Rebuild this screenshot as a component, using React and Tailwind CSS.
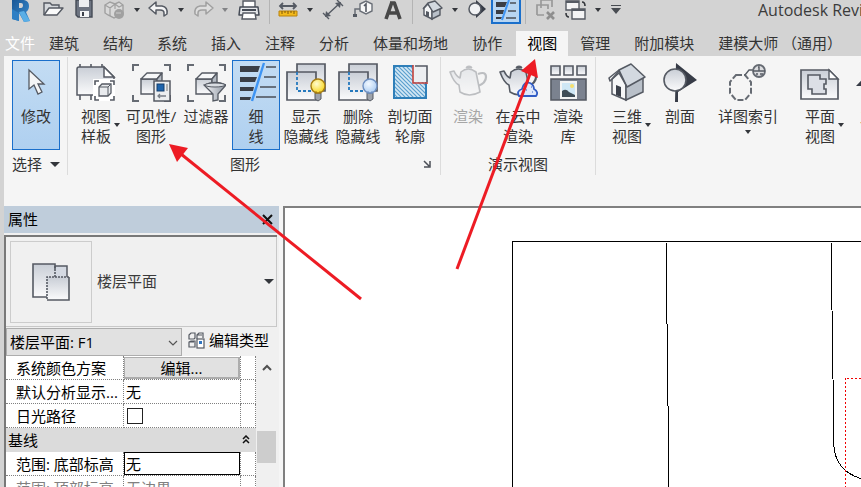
import { useState } from 'react';
import clsx from 'clsx';

const INK = '#555a63';

const Svg = ({ size = 40, children }) => (
  <svg width={size} height={size} viewBox={`0 0 ${size} ${size}`} fill="none" className="shrink-0" aria-hidden="true">
    {children}
  </svg>
);

// Gradients shared by all icons
const Gradients = () => (
  <svg width="0" height="0" className="absolute" aria-hidden="true">
    <defs>
      <linearGradient id="metal" x1="0" y1="0" x2="0" y2="1">
        <stop offset="0" stopColor="#c9ced6" />
        <stop offset="1" stopColor="#fbfbfc" />
      </linearGradient>
      <linearGradient id="steel" x1="0" y1="0" x2="1" y2="0">
        <stop offset="0" stopColor="#f4f5f7" />
        <stop offset="1" stopColor="#8f97a3" />
      </linearGradient>
      <linearGradient id="logo" x1="0" y1="0" x2="1" y2="1">
        <stop offset="0" stopColor="#1a5796" />
        <stop offset="1" stopColor="#3b8fd2" />
      </linearGradient>
      <radialGradient id="bulbOn" cx="0.4" cy="0.35" r="0.7">
        <stop offset="0" stopColor="#fffbd0" />
        <stop offset="1" stopColor="#f8d413" />
      </radialGradient>
      <radialGradient id="bulbOff" cx="0.4" cy="0.35" r="0.7">
        <stop offset="0" stopColor="#f2f8ff" />
        <stop offset="1" stopColor="#a9cbf2" />
      </radialGradient>
      <pattern id="hatch" width="4" height="4" patternUnits="userSpaceOnUse">
        <rect width="4" height="4" fill="#d4e8f5" />
        <path d="M-1 -1 5 5M-1 3 1 5M3 -1 5 1" stroke="#5a9fce" strokeWidth="1.2" />
      </pattern>
    </defs>
  </svg>
);

/* ---------- ribbon icons ---------- */

const CursorIcon = () => (
  <Svg>
    <path d="M13 8v19l5-4 4 9 4-2-4-8h6z" fill="#f4f5f6" stroke={INK} strokeWidth="1.3" />
  </Svg>
);

const Brackets = () => (
  <path d="M2 9V3h6M33 3h6v6M39 33v6h-6M8 39H2v-6" stroke="#666b73" strokeWidth="2" />
);

const Cube = () => (
  <>
    <path d="M10 17h16v15H10z" fill="url(#metal)" stroke={INK} strokeWidth="1.4" />
    <path d="M10 17l6-6h15l-5 6z" fill="#f7f8f9" stroke={INK} strokeWidth="1.4" strokeLinejoin="round" />
    <path d="M26 17l5-6v14l-5 7z" fill="#b4bac3" stroke={INK} strokeWidth="1.4" strokeLinejoin="round" />
  </>
);

const TemplateIcon = () => (
  <Svg>
    <path d="M4 2v36M15 2v4M26 2v4M15 33v5" stroke={INK} strokeWidth="1.6" />
    <path d="M1 7q0-2 2-2h25l10 10v18H1z" fill="url(#metal)" stroke={INK} strokeWidth="1.5" />
    <path d="M28 5v10h10z" fill="#fff" stroke={INK} strokeWidth="1.5" />
    <path d="M17 17h22v22H17z" fill="#fff" />
    <path d="M19 23v-4h4M34 19h4v4M38 34v4h-4M23 38h-4v-4" stroke={INK} strokeWidth="1.6" />
    <path d="M23 25l3-3h9v9l-3 3h-9z" fill="#e9ebee" stroke={INK} strokeWidth="1.3" />
    <path d="M23 25h9v9M32 25l3-3" stroke={INK} />
  </Svg>
);

const VisibilityIcon = () => (
  <Svg>
    <Brackets />
    <Cube />
    <rect x="23" y="19" width="16" height="20" fill="#eceef0" stroke={INK} strokeWidth="1.5" />
    <rect x="26" y="22" width="7" height="7" fill="#1f65ad" stroke="#153e6d" />
    <path d="M36 22v7" stroke="#777" />
    <path d="M35 34h-8M29 32l-2 2 2 2" stroke="#777d86" strokeWidth="1.3" />
  </Svg>
);

const FilterIcon = () => (
  <Svg>
    <Brackets />
    <Cube />
    <path d="M18 23q11-5 22 0l-8 9v6l-5 1v-7z" fill="url(#steel)" stroke={INK} strokeWidth="1.3" />
    <ellipse cx="29" cy="23" rx="10" ry="2" fill="#d9dde2" stroke={INK} />
  </Svg>
);

const ThinLinesIcon = () => (
  <Svg>
    <path d="M4 4h20l-2 6H4zM4 15h17l-2 5H4zM4 25h14l-1 4H4zM4 35h11l-1 3H4z" fill="#3a3e46" />
    <path d="M30 5h10M28 15h12M24 25h16M20 35h20" stroke="#4b4f57" strokeWidth="1.6" />
    <path d="M28 1 16 39" stroke="#3d94f3" strokeWidth="2.4" />
  </Svg>
);

const HiddenLinesIcon = ({ bulb, stroke }) => (
  <Svg>
    <path d="M11 2h28v27H11z" fill="url(#metal)" stroke={INK} strokeWidth="1.7" />
    <path d="M1 10h29v28H1z" fill="url(#metal)" stroke={INK} strokeWidth="1.7" />
    <path d="M11 10v19h17" stroke="#2679bd" strokeWidth="1.8" strokeDasharray="3 2" />
    <path d="M29 31h6v6l-3 2-3-2z" fill="#9da2aa" stroke={INK} />
    <circle cx="32" cy="24" r="7" fill={bulb} stroke={stroke} strokeWidth="1.4" />
    <path d="M30 29v3M34 29v3" stroke={stroke} />
  </Svg>
);

const CutProfileIcon = () => (
  <Svg>
    <path d="M4 4h32v32H4z" fill="url(#hatch)" stroke="#2f7fb9" strokeWidth="2" />
    <path d="M23 3h14v17H23z" fill="#eceef1" />
    <path d="M25 4h12v16" stroke={INK} strokeWidth="1.6" />
    <path d="M23 3v18h15" stroke="#c4423c" strokeWidth="1.6" />
  </Svg>
);

const Teapot = () => (
  <>
    <path d="M30 12q8-3 8 3 0 6-8 9" stroke={INK} strokeWidth="2.2" />
    <path d="M13 10q7-6 15 0l4 20q-11 6-20 0l-1-7q-5-2-9-13l4-1q2 5 6 7z" fill="url(#metal)" stroke={INK} strokeWidth="1.6" strokeLinejoin="round" />
    <path d="M18 6q0-2 3-2t3 2z" fill={INK} stroke={INK} />
  </>
);

const RenderIcon = () => (
  <Svg>
    <g opacity="0.35">
      <Teapot />
    </g>
  </Svg>
);

const CloudRenderIcon = () => (
  <Svg>
    <Teapot />
    <path d="M21 34q-3-5 3-7 2-8 8-6 4 2 4 6 5 3 2 7z" fill="#dfe8fa" stroke="#315cc4" strokeWidth="1.8" />
    <path d="M28 28h1M33 25h1M34 30h1" stroke="#315cc4" strokeWidth="1.2" />
  </Svg>
);

const GalleryIcon = () => (
  <Svg>
    <path d="M3 4h9v9H3zM16 4h9v9h-9zM29 4h9v9h-9z" fill="url(#metal)" stroke={INK} strokeWidth="1.6" />
    <path d="M3 17h35v21H3z" fill="#7b828f" stroke={INK} strokeWidth="1.6" />
    <path d="M13 20h15v16H13z" fill="#cfe7f5" stroke="#f3f4f4" strokeWidth="2" />
    <path d="M14 29q4-3 7 1l6 3v2H14z" fill="#3f4d57" />
    <circle cx="24" cy="24" r="2" fill="#f6df6d" />
  </Svg>
);

const HouseIcon = () => (
  <Svg>
    <path d="M5 17v15l14 6V22L12 9z" fill="#f5f6f7" stroke={INK} strokeWidth="1.5" />
    <path d="M19 24l17-9v15l-17 8z" fill="#b9c0c9" stroke={INK} strokeWidth="1.5" />
    <path d="M9 23l5 2v10l-5-2z" fill="#3b404a" />
    <path d="M12 8 24 2l14 13-18 10z" fill="#d3d9e0" stroke={INK} strokeWidth="1.5" strokeLinejoin="round" />
    <path d="M12 8 2 16l1 3 9-8 8 14" stroke={INK} strokeWidth="1.5" strokeLinejoin="round" />
  </Svg>
);

const SectionIcon = () => (
  <Svg>
    <path d="M16 1l21 17-19 12v10h-3z" fill="#373c47" />
    <circle cx="15" cy="18" r="11" fill="url(#metal)" stroke={INK} strokeWidth="1.6" />
  </Svg>
);

const CalloutIcon = () => (
  <Svg>
    <path d="M8 13h9l6 7v11l-6 7H8l-6-7V20z" stroke="#666b73" strokeWidth="2" strokeDasharray="6 2" />
    <path d="M17 13l4-5h6" stroke="#565b63" strokeWidth="1.3" />
    <circle cx="31" cy="9" r="6" fill="#dcdde0" stroke="#666b73" strokeWidth="1.8" />
    <path d="M25 9h12M30 5h1v4M28 12h2M32 12h3" stroke="#565b63" strokeWidth="1.4" />
  </Svg>
);

const PlanIcon = () => (
  <Svg>
    <path d="M1 8h28l9 9v20H1z" fill="url(#metal)" stroke={INK} strokeWidth="1.7" />
    <path d="M29 8v9h9z" fill="#fff" stroke={INK} strokeWidth="1.4" />
    <path d="M8 13h12v4h6v5h-2v5h2v5H12v-5H8z" fill="#dcdfe6" stroke={INK} strokeWidth="1.6" />
  </Svg>
);

const ElevationIcon = () => (
  <Svg>
    <path d="M1 24 20 4l19 20z" fill="#373c47" />
    <circle cx="20" cy="22" r="10" fill="url(#metal)" stroke={INK} strokeWidth="1.8" />
  </Svg>
);

/* ---------- small parts ---------- */

const Caret = ({ wide, faded }) => (
  <svg
    width={wide ? 10 : 6}
    height={wide ? 5 : 4}
    viewBox="0 0 10 6"
    preserveAspectRatio="none"
    className={clsx('shrink-0', faded && 'opacity-50')}
    aria-hidden="true"
  >
    <path d="M0 0h10L5 6z" fill="#33363b" />
  </svg>
);

const QuickButton = ({ label, className, children }) => (
  <button type="button" aria-label={label} className={clsx('flex h-6 shrink-0 justify-center', className)}>
    {children}
  </button>
);

const QuickCaret = ({ label, faded }) => (
  <button type="button" aria-label={label} className="flex h-5 w-4 shrink-0 items-center justify-center">
    <Caret faded={faded} />
  </button>
);

const Separator = () => <div className="mx-1 h-6 w-px shrink-0 bg-[#b4b4b4]" />;

const QuickAccess = () => (
  <header className="flex h-[31px] items-start overflow-hidden whitespace-nowrap pl-[5px]">
    <QuickButton label="Revit" className="mr-1 w-[30px]">
      <Svg size={24}>
        <path fillRule="evenodd" d="M4 0h12q5 1 5 6 0 4-3 6l4 9-6 1-5-9v8l-7-2zM11 3v5h2q2 0 2-3 0-2-2-2z" fill="url(#logo)" />
        <path d="M11 12l5-1 6 10-6 1z" fill="#5aaee6" />
        <path d="M4 9l7 4v8l-7-2z" fill="#2f7fc4" />
      </Svg>
    </QuickButton>
    <QuickButton label="打开" className="w-[30px]">
      <Svg size={24}>
        <path d="M2 15V3h6l2 2h7v4" fill="#d5d8dc" stroke={INK} strokeWidth="1.4" />
        <path d="M2 15 7 8h14l-6 7z" fill="#fafafa" stroke={INK} strokeWidth="1.4" strokeLinejoin="round" />
      </Svg>
    </QuickButton>
    <QuickButton label="保存" className="w-[30px]">
      <Svg size={24}>
        <path d="M4 0h16v17H6l-2-2z" fill="#6d7481" stroke="#454b56" strokeWidth="1.4" />
        <path d="M7 0h10v7H7z" fill="#eceef1" />
        <path d="M8 11h9v6H8z" fill="#f3f4f5" />
        <path d="M10 12h2v4h-2z" fill="#3c414a" />
      </Svg>
    </QuickButton>
    <QuickButton label="同步" className="w-[30px]">
      <Svg size={24}>
        <path d="M3 5l5-3 5 2 4-2 4 3v8l-9 5-6-3-3-2z" fill="#d9d9d9" stroke="#a0a0a0" strokeWidth="1.4" />
        <path d="M3 5l5 3 5-4 4 3 4-2M8 8v8M13 4v5" stroke="#a0a0a0" strokeWidth="1.2" />
        <circle cx="17" cy="14" r="5" fill="#a0a0a0" />
        <path d="M14 13h5" stroke="#ccc" />
      </Svg>
    </QuickButton>
    <QuickCaret label="同步选项" />
    <QuickButton label="放弃" className="w-7">
      <Svg size={24}>
        <path d="M2 8 9 2v4h6q6 1 5 8l-3 2v-3q0-3-4-3H9v4z" fill="#f4f4f5" stroke={INK} strokeWidth="1.5" strokeLinejoin="round" />
      </Svg>
    </QuickButton>
    <QuickCaret label="放弃列表" />
    <QuickButton label="重做" className="w-7">
      <Svg size={24}>
        <path d="M22 8 15 2v4H9Q3 7 4 14l3 2v-3q0-3 4-3h4v4z" fill="#dedede" stroke="#a0a0a0" strokeWidth="1.5" strokeLinejoin="round" />
      </Svg>
    </QuickButton>
    <QuickCaret label="重做列表" faded />
    <QuickButton label="打印" className="w-8">
      <Svg size={24}>
        <path d="M6 1h12v7H6z" fill="#fff" stroke={INK} strokeWidth="1.4" />
        <path d="M3 7h18l1 8H2z" fill="#e5e7ea" stroke="#454b56" strokeWidth="1.5" strokeLinejoin="round" />
        <path d="M5 10h14" stroke="#454b56" strokeWidth="2" />
        <path d="M6 13h12l1 6H5z" fill="#fff" stroke={INK} strokeWidth="1.4" />
      </Svg>
    </QuickButton>
    <Separator />
    <QuickButton label="测量" className="w-7">
      <Svg size={24}>
        <path d="M4 6h16M7 3 4 6l3 3M17 3l3 3-3 3" stroke={INK} strokeWidth="1.8" />
        <path d="M3 11h18v5H3z" fill="#f2b91c" stroke="#b9820d" />
        <path d="M6 11v3M9 11v2M12 11v3M15 11v2M18 11v3" stroke="#7d560a" />
      </Svg>
    </QuickButton>
    <QuickCaret label="测量选项" />
    <QuickButton label="对齐尺寸标注" className="w-[30px]">
      <Svg size={24}>
        <path d="M5 16 19 3M2 13l6 6M16 0l6 6" stroke={INK} strokeWidth="1.4" />
        <path d="M4 17l1-6 5 5zM20 2l-1 6-5-5z" fill={INK} />
      </Svg>
    </QuickButton>
    <QuickButton label="按类别标记" className="w-[30px]">
      <Svg size={24}>
        <path d="M9 4l6-3 6 3v7l-6 3-6-3z" fill="#f7f7f7" stroke="#6a6f77" strokeWidth="1.4" />
        <path d="M9 9H4v6" stroke="#6a6f77" strokeWidth="1.5" />
        <path d="M2 14h4v3H2z" fill={INK} />
        <path d="M13 6l2-2v8" stroke={INK} strokeWidth="1.6" />
      </Svg>
    </QuickButton>
    <QuickButton label="文字" className="w-[30px]">
      <Svg size={24}>
        <path d="M9 3h5M11 2 5 19M13 2l6 17M8 13h8" stroke="#484848" strokeWidth="3.6" />
      </Svg>
    </QuickButton>
    <Separator />
    <QuickButton label="默认三维视图" className="w-[30px]">
      <Svg size={24}>
        <path d="M4 8v7l8 4V10L8 4z" fill="#f5f6f7" stroke={INK} strokeWidth="1.4" />
        <path d="M12 11l8-3v7l-8 4z" fill="#b9c0c9" stroke={INK} strokeWidth="1.4" />
        <path d="M3 9 8 3l7-2 7 7-9 4-5-8" fill="#d3d9e0" stroke={INK} strokeWidth="1.4" strokeLinejoin="round" />
        <path d="M6 11l3 1v5l-3-1z" fill={INK} />
      </Svg>
    </QuickButton>
    <QuickCaret label="三维视图选项" />
    <QuickButton label="剖面" className="w-7">
      <Svg size={24}>
        <path d="M11 0l10 9-10 9z" fill="#373c47" />
        <circle cx="10" cy="9" r="6" fill="#f1f2f4" stroke={INK} strokeWidth="1.5" />
      </Svg>
    </QuickButton>
    <QuickButton label="细线" className="w-[30px] border-2 border-t-0 border-[#1a6fcb] bg-[#b7d5f2]">
      <Svg size={24}>
        <path d="M2 2h11l-2 5H2zM2 10h8l-1 4H2zM2 17h6l-1 2H2z" fill="#3a3e46" />
        <path d="M16 3h6M14 11h8M12 18h10" stroke="#4b4f57" strokeWidth="1.5" />
        <path d="M15 0 8 20" stroke="#3d94f3" strokeWidth="2" />
      </Svg>
    </QuickButton>
    <Separator />
    <QuickButton label="关闭非活动视图" className="w-8">
      <Svg size={24}>
        <path d="M7 8V0h11v7M3 15V5h11v4M3 15h7" stroke="#999" strokeWidth="1.7" />
        <path d="M13 12l7 7M20 12l-7 7" stroke="#8e8e8e" strokeWidth="2.6" />
      </Svg>
    </QuickButton>
    <QuickButton label="切换窗口" className="w-7">
      <Svg size={24}>
        <path d="M2 1h13v9H2z" fill="#f4f4f5" stroke={INK} strokeWidth="1.4" />
        <path d="M2 2h13" stroke={INK} strokeWidth="2" />
        <path d="M8 9h13v10H8z" fill="#f4f4f5" stroke={INK} strokeWidth="1.4" />
        <path d="M8 10h13" stroke={INK} strokeWidth="2" />
        <path d="M18 2q3 0 3 4M5 17q-3 0-3-4" stroke="#33363b" strokeWidth="1.6" />
      </Svg>
    </QuickButton>
    <QuickCaret label="窗口列表" />
    <QuickButton label="自定义快速访问工具栏" className="w-5">
      <svg width="12" height="16" viewBox="0 0 12 16" aria-hidden="true">
        <path d="M1 5h10v1H1zM1 8h10l-5 6z" fill="#484c52" />
      </svg>
    </QuickButton>
    <h1 className="ml-[132px] text-base leading-5 text-[#3b3b3b]">Autodesk Revit</h1>
  </header>
);

const TABS = ['建筑', '结构', '系统', '插入', '注释', '分析', '体量和场地', '协作', '视图', '管理', '附加模块', '建模大师 （通用）'];

const TabBar = ({ active, onSelect }) => (
  <nav className="flex h-[25px] overflow-hidden whitespace-nowrap pl-[5px]">
    <button type="button" className="mr-0.5 text-white">文件</button>
    {TABS.map((tab) => (
      <button
        key={tab}
        type="button"
        onClick={() => onSelect(tab)}
        className={clsx(tab === active ? 'ml-0.5 bg-[#f5f5f5] px-[11px] text-black' : 'px-3')}
      >
        {tab}
      </button>
    ))}
  </nav>
);

const RibbonButton = ({ icon, lines, className, active, disabled, caret }) => (
  <button
    type="button"
    disabled={disabled}
    className={clsx(
      'flex h-[90px] shrink-0 flex-col items-center border pt-px leading-5',
      active ? 'border-[#1a6fcb] bg-linear-to-b from-[#c3dcf3] to-[#afd0f0]' : 'border-transparent',
      disabled && 'text-[#a6a6a6]',
      className
    )}
  >
    {icon}
    <span className="relative mt-1 whitespace-nowrap">
      {lines.map((line) => (
        <span key={line} className="block">{line}</span>
      ))}
      {caret === 'side' && (
        <span className="absolute top-[17px] left-full ml-[3px]">
          <Caret />
        </span>
      )}
    </span>
    {caret === 'below' && (
      <span className="mt-1">
        <Caret />
      </span>
    )}
  </button>
);

const Panel = ({ title, className, children }) => (
  <section className={clsx('flex shrink-0 flex-col border-r border-[#dcdcdc] pt-[3px]', className)}>
    <div className="flex">{children}</div>
    <div className="flex items-center justify-center pt-1 leading-5">{title}</div>
  </section>
);

const Ribbon = () => (
  <div className="ml-1 flex h-[150px] items-start overflow-hidden bg-[#f5f5f5]">
    <div className="mt-px flex h-[118px]">
      <Panel
        className="pr-[7px] pl-2"
        title={
          <button type="button" className="flex items-center gap-2">
            选择
            <Caret wide />
          </button>
        }
      >
        <RibbonButton className="w-12" active icon={<CursorIcon />} lines={['修改']} />
      </Panel>
      <Panel
        className="pr-1 pl-[2px]"
        title={
          <>
            <span className="flex-1 text-center">图形</span>
            <button type="button" aria-label="图形显示选项" className="pr-1 pl-[2px]">
              <svg width="10" height="10" viewBox="0 0 10 10" fill="none" aria-hidden="true">
                <path d="M2 2l5 5M8 2v6H2" stroke="#4b4f57" strokeWidth="1.5" />
              </svg>
            </button>
          </>
        }
      >
        <RibbonButton className="w-[52px]" icon={<TemplateIcon />} lines={['视图', '样板']} caret="side" />
        <RibbonButton className="w-[58px]" icon={<VisibilityIcon />} lines={['可见性/', '图形']} />
        <RibbonButton className="w-[52px]" icon={<FilterIcon />} lines={['过滤器']} />
        <RibbonButton className="w-12" active icon={<ThinLinesIcon />} lines={['细', '线']} />
        <RibbonButton className="w-[52px]" icon={<HiddenLinesIcon bulb="url(#bulbOn)" stroke="#a67c12" />} lines={['显示', '隐藏线']} />
        <RibbonButton className="w-[52px]" icon={<HiddenLinesIcon bulb="url(#bulbOff)" stroke="#6e8fc0" />} lines={['删除', '隐藏线']} />
        <RibbonButton className="w-[52px]" icon={<CutProfileIcon />} lines={['剖切面', '轮廓']} />
      </Panel>
      <Panel className="px-[2px]" title="演示视图">
        <RibbonButton className="w-[50px]" disabled icon={<RenderIcon />} lines={['渲染']} />
        <RibbonButton className="w-[50px]" icon={<CloudRenderIcon />} lines={['在云中', '渲染']} />
        <RibbonButton className="w-[50px]" icon={<GalleryIcon />} lines={['渲染', '库']} />
      </Panel>
      <Panel className="px-[3px]">
        <RibbonButton className="w-14" icon={<HouseIcon />} lines={['三维', '视图']} caret="side" />
        <RibbonButton className="w-[50px]" icon={<SectionIcon />} lines={['剖面']} />
        <RibbonButton className="w-[86px]" icon={<CalloutIcon />} lines={['详图索引']} caret="below" />
        <RibbonButton className="w-[58px]" icon={<PlanIcon />} lines={['平面', '视图']} caret="side" />
        <RibbonButton className="w-[52px]" icon={<ElevationIcon />} lines={['立面']} />
      </Panel>
    </div>
  </div>
);

/* ---------- properties palette ---------- */

const cell = 'h-6 border-r border-b border-dotted border-[#808080] p-0';

const PropertyRow = ({ name, htmlFor, muted, children }) => (
  <tr className={clsx(muted && 'text-[#808080]')}>
    <th scope="row" className={clsx(cell, 'truncate pl-[10px] text-left font-normal')}>
      <label htmlFor={htmlFor}>{name}</label>
    </th>
    <td className={cell}>{children}</td>
    <td className={cell} />
  </tr>
);

const TypeThumbnail = () => (
  <Svg>
    <path d="M21 4h15v15H21z" fill="#d4d9e2" stroke={INK} strokeWidth="1.5" />
    <path d="M2 2h22v33H2z" fill="url(#metal)" />
    <path d="M16 35H2V2h22v5" stroke={INK} strokeWidth="1.6" />
    <path d="M16 15h22v23H16z" fill="url(#metal)" />
    <path d="M38 15v23H16" stroke={INK} strokeWidth="1.6" />
    <path d="M24 4v11M38 15H16v22" stroke={INK} strokeWidth="1.6" strokeDasharray="2 1" />
  </Svg>
);

const Properties = () => {
  const [sunPath, setSunPath] = useState(false);
  const [base, setBase] = useState('无');

  return (
    <aside className="flex w-[275px] shrink-0 flex-col overflow-hidden bg-[#f0f0f0] text-black">
      <div className="flex h-[27px] shrink-0 items-center justify-between bg-[#bfcddb] pr-[6px] pl-1">
        <h2>属性</h2>
        <button type="button" aria-label="关闭">
          <svg width="11" height="11" viewBox="0 0 11 11" aria-hidden="true">
            <path d="M1 1l9 9M10 1l-9 9" stroke="#111" strokeWidth="2" />
          </svg>
        </button>
      </div>

      <div className="mt-[2px] mr-[2px] flex min-h-0 flex-1 flex-col border-t-2 border-l-2 border-[#787878]">
        <button
          type="button"
          className="flex h-[90px] shrink-0 items-center border-r border-b border-[#c8c8c8] pr-[2px] pl-1 text-[#3b3b3b]"
        >
          <span className="flex h-[82px] w-[82px] items-center justify-center border border-[#cccccc]">
            <TypeThumbnail />
          </span>
          <span className="ml-[5px] flex-1 text-left">楼层平面</span>
          <Caret wide />
        </button>

        <div className="mt-px flex h-7 shrink-0 items-center">
          <div className="relative h-7 w-44">
            <select
              aria-label="实例"
              className="h-full w-full appearance-none border border-[#adadad] bg-[#e1e1e1] pl-[3px]"
            >
              <option>楼层平面: F1</option>
            </select>
            <svg width="10" height="6" viewBox="0 0 10 6" fill="none" className="pointer-events-none absolute top-3 right-1" aria-hidden="true">
              <path d="M1 1l4 4 4-4" stroke="#555" strokeWidth="1.2" />
            </svg>
          </div>
          <button type="button" className="ml-[6px] flex items-center gap-1 pb-1">
            <svg width="17" height="17" viewBox="0 0 17 17" fill="none" aria-hidden="true">
              <path d="M1 3l2-2h4v5l-1 1H1zM9 3l2-2h4v5M9 7V3h5M1 10l2-1h4v6H1zM1 10h5" stroke={INK} strokeWidth="1.2" />
              <rect x="9" y="7" width="7" height="9" fill="#fff" stroke={INK} strokeWidth="1.2" />
              <path d="M11 9h3v3h-3z" fill="#2f74c0" />
            </svg>
            编辑类型
          </button>
        </div>

        <div className="flex min-h-0 flex-1 overflow-hidden bg-white">
          <div className="min-w-0 flex-1">
            <table className="w-full table-fixed border-separate border-spacing-0 leading-5">
              <colgroup>
                <col className="w-[118px]" />
                <col />
                <col className="w-[15px]" />
              </colgroup>
              <tbody>
                <PropertyRow name="系统颜色方案">
                  <button
                    type="button"
                    className="block h-[22px] w-full border border-r-2 border-b-2 border-[#adadad] bg-[#e1e1e1]"
                  >
                    <span className="block leading-5">编辑...</span>
                  </button>
                </PropertyRow>
                <PropertyRow name="默认分析显示...">
                  <span className="pl-[2px]">无</span>
                </PropertyRow>
                <PropertyRow name="日光路径" htmlFor="sun-path">
                  <input
                    id="sun-path"
                    type="checkbox"
                    checked={sunPath}
                    onChange={(e) => setSunPath(e.target.checked)}
                    className="ml-[3px] block h-4 w-4 appearance-none border border-[#222] bg-white checked:bg-[#222]"
                  />
                </PropertyRow>
                <tr className="bg-[#dbdbdb]">
                  <th scope="colgroup" colSpan={3} className="h-6 p-0 text-left font-normal">
                    <button type="button" className="flex w-full items-center justify-between pr-[6px] pl-[2px]">
                      基线
                      <svg width="8" height="10" viewBox="0 0 8 10" fill="none" aria-hidden="true">
                        <path d="M1 4l3-3 3 3M1 8l3-3 3 3" stroke="#111" strokeWidth="1.5" />
                      </svg>
                    </button>
                  </th>
                </tr>
                <PropertyRow name="范围: 底部标高" htmlFor="base-level">
                  <input
                    id="base-level"
                    type="text"
                    value={base}
                    onChange={(e) => setBase(e.target.value)}
                    className="block h-[23px] w-full border border-black bg-white pl-px outline-none"
                  />
                </PropertyRow>
                <PropertyRow name="范围: 顶部标高" muted>
                  <span className="pl-[2px]">无边界</span>
                </PropertyRow>
              </tbody>
            </table>
          </div>
          <div className="flex w-[21px] shrink-0 flex-col items-center bg-[#f0f0f0]">
            <svg width="10" height="7" viewBox="0 0 10 7" fill="none" className="mt-2" aria-hidden="true">
              <path d="M1 6l4-4 4 4" stroke="#505050" strokeWidth="2" />
            </svg>
            <div className="mt-[60px] h-8 w-[19px] shrink-0 bg-[#cdcdcd]" />
          </div>
        </div>
      </div>
    </aside>
  );
};

const DrawingArea = () => (
  <main className="ml-1 min-w-0 flex-1 overflow-hidden border-t-2 border-l-2 border-[#808080] bg-white">
    <svg width="100%" height="100%" fill="none" shapeRendering="crispEdges" role="img" aria-label="F1">
      <path d="M1200 33H227V900" stroke="#000" />
      <path d="M381 33 384 279 387 525" stroke="#000" />
      <path d="M546 33 549 239Q551 263 577 271" stroke="#000" />
      <path d="M900 170H560V900" stroke="#f00000" strokeDasharray="2 2" />
    </svg>
  </main>
);

// Red pointers drawn over the window
const Annotations = () => (
  <svg className="pointer-events-none absolute inset-0 h-full w-full" aria-hidden="true">
    <g stroke="#ed1c24" strokeWidth="3">
      <path d="M361 299 181 154" />
      <path d="M457 269 530 74" />
    </g>
    <g fill="#ed1c24">
      <path d="M169 144l19 4-11 14z" />
      <path d="M535 59l3 19-17-7z" />
    </g>
  </svg>
);

export default function App() {
  const [tab, setTab] = useState('视图');

  return (
    <div className="relative flex h-screen flex-col overflow-hidden bg-[#d3d3d3] font-['Open_Sans','Noto_Sans_CJK_SC',sans-serif] text-[15px] text-[#333]">
      <Gradients />
      <QuickAccess />
      <TabBar active={tab} onSelect={setTab} />
      <Ribbon />
      <div className="ml-1 flex min-h-0 flex-1 bg-[#f5f5f5]">
        <Properties />
        <DrawingArea />
      </div>
      <Annotations />
    </div>
  );
}
